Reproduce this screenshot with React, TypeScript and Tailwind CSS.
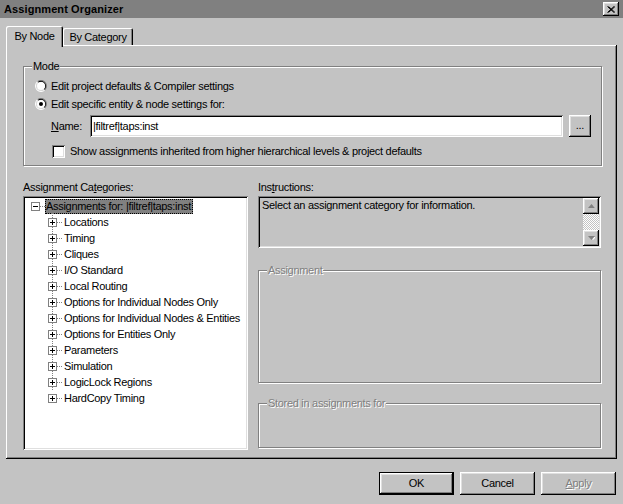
import React from 'react';

const raised =
  'shadow-[inset_-1px_-1px_#000,inset_1px_1px_#fff,inset_-2px_-2px_#808080,inset_2px_2px_#dfdfdf]';
const sunken =
  'shadow-[inset_1px_1px_#808080,inset_-1px_-1px_#fff,inset_2px_2px_#000,inset_-2px_-2px_#dfdfdf]';
const etched = 'border border-[#808080] shadow-[inset_1px_1px_#fff,1px_1px_#fff]';
const disabledText = 'text-[#808080] [text-shadow:1px_1px_0_#fff]';

const categories = [
  'Locations',
  'Timing',
  'Cliques',
  'I/O Standard',
  'Local Routing',
  'Options for Individual Nodes Only',
  'Options for Individual Nodes & Entities',
  'Options for Entities Only',
  'Parameters',
  'Simulation',
  'LogicLock Regions',
  'HardCopy Timing',
];

function Radio({ checked }: { checked?: boolean }) {
  return (
    <svg width="12" height="12" viewBox="0 0 12 12" className="shrink-0">
      <circle cx="6" cy="6" r="5.5" fill="none" stroke="#fff" strokeWidth="1" strokeDasharray="17.3 17.3" strokeDashoffset="-8.6" transform="rotate(-45 6 6)" />
      <circle cx="6" cy="6" r="5.5" fill="none" stroke="#808080" strokeWidth="1" strokeDasharray="17.3 17.3" strokeDashoffset="8.6" transform="rotate(-45 6 6)" />
      <circle cx="6" cy="6" r="4.5" fill="none" stroke="#000" strokeWidth="1" strokeDasharray="14.1 14.1" strokeDashoffset="7" transform="rotate(-45 6 6)" />
      <circle cx="6" cy="6" r="4.5" fill="none" stroke="#dfdfdf" strokeWidth="1" strokeDasharray="14.1 14.1" strokeDashoffset="-7" transform="rotate(-45 6 6)" />
      <circle cx="6" cy="6" r="4" fill="#fff" />
      {checked && <circle cx="6" cy="6" r="2" fill="#000" />}
    </svg>
  );
}

function Expander({ minus }: { minus?: boolean }) {
  return (
    <svg width="9" height="9" viewBox="0 0 9 9" className="shrink-0 relative z-10">
      <rect x="0.5" y="0.5" width="8" height="8" fill="#fff" stroke="#808080" />
      <line x1="2" y1="4.5" x2="7" y2="4.5" stroke="#000" />
      {!minus && <line x1="4.5" y1="2" x2="4.5" y2="7" stroke="#000" />}
    </svg>
  );
}

function GroupBox({ label, disabled, className, children }: { label: string; disabled?: boolean; className?: string; children?: React.ReactNode }) {
  return (
    <div className={`relative ${etched} ${className ?? ''}`}>
      <span className={`absolute left-[8px] top-[-8px] px-[1px] bg-[#c3c3c3] leading-[14px] ${disabled ? disabledText : ''}`}>
        {label}
      </span>
      {children}
    </div>
  );
}

function ArrowButton({ up }: { up?: boolean }) {
  return (
    <div className={`w-[16px] h-[16px] bg-[#c3c3c3] flex items-center justify-center ${raised}`}>
      <svg width="7" height="4" viewBox="0 0 7 4">
        {up ? (
          <>
            <path d="M1 4 L4 1 L7 4 Z" fill="#fff" transform="translate(1 1)" />
            <path d="M0 4 L3.5 0 L7 4 Z" fill="#808080" />
          </>
        ) : (
          <>
            <path d="M1 0 L4 3 L7 0 Z" fill="#fff" transform="translate(1 1)" />
            <path d="M0 0 L3.5 4 L7 0 Z" fill="#808080" />
          </>
        )}
      </svg>
    </div>
  );
}

export default function App() {
  return (
    <div className="w-[623px] h-[504px] bg-[#c3c3c3] flex flex-col font-['Liberation_Sans',Arial,sans-serif] text-[11px] tracking-[-0.3px] text-black overflow-hidden select-none">
      {/* Title bar */}
      <div className="h-[18px] bg-[#808080] flex items-center justify-between pl-[4px] pr-[4px]">
        <span className="font-bold text-[11px] tracking-[0.1px] leading-none">Assignment Organizer</span>
        <div className={`w-[16px] h-[14px] bg-[#c3c3c3] flex items-center justify-center ${raised}`}>
          <svg width="8" height="7" viewBox="0 0 8 7">
            <path d="M0.5 0.5 L7 6.5 M1.5 0.5 L8 6.5 M7 0.5 L0.5 6.5 M8 0.5 L1.5 6.5" stroke="#000" strokeWidth="1" />
          </svg>
        </div>
      </div>

      {/* Tabs */}
      <div className="flex items-end h-[19px] mt-[8px] pl-[6px]">
        <div className="relative z-10 -mb-[2px] h-[21px] w-[57px] bg-[#c3c3c3] rounded-t-[2px] shadow-[inset_1px_1px_#fff,inset_-1px_0_#000,inset_-2px_0_#808080] flex items-start justify-center pt-[4px] leading-[12px]">
          By Node
        </div>
        <div className="h-[17px] w-[70px] bg-[#c3c3c3] rounded-t-[2px] shadow-[inset_1px_1px_#fff,inset_-1px_0_#000,inset_-2px_0_#808080] flex items-start justify-center pt-[3px] leading-[12px]">
          By Category
        </div>
      </div>

      {/* Tab panel */}
      <div className="ml-[6px] w-[611px] h-[414px] pl-[17px] pr-[15px] pt-[21px] shadow-[inset_-1px_-1px_#000,inset_1px_1px_#fff,inset_-2px_-2px_#808080]">
        <GroupBox label="Mode" className="h-[100px] w-[579px] pl-[11px] pt-[12px]">
          <div className="flex items-center gap-[4px] h-[14px]">
            <Radio />
            <span className="leading-[14px]">Edit project defaults &amp; Compiler settings</span>
          </div>
          <div className="flex items-center gap-[4px] h-[14px] mt-[4px]">
            <Radio checked />
            <span className="leading-[14px]">Edit specific entity &amp; node settings for:</span>
          </div>
          <div className="flex items-center mt-[4px] pl-[16px] h-[22px]">
            <span className="w-[39px]">
              <span className="underline">N</span>ame:
            </span>
            <div className={`w-[473px] h-[22px] bg-white pl-[3px] flex items-center ${sunken}`}>
              |filtref|taps:inst
            </div>
            <div className={`ml-[6px] w-[22px] h-[22px] bg-[#c3c3c3] flex items-center justify-center pb-[2px] ${raised}`}>
              ...
            </div>
          </div>
          <div className="flex items-center gap-[5px] mt-[8px] pl-[17px] h-[13px]">
            <div className={`w-[13px] h-[13px] bg-white shrink-0 ${sunken}`} />
            <span className="leading-[13px]">Show assignments inherited from higher hierarchical levels &amp; project defaults</span>
          </div>
        </GroupBox>

        <div className="flex gap-[10px] mt-[15px]">
          {/* Left column: tree */}
          <div className="w-[225px] flex flex-col">
            <div className="h-[15px] leading-[12px]">
              Assignment Ca<span className="underline">t</span>egories:
            </div>
            <div className={`h-[254px] bg-white pt-[2px] pl-[8px] ${sunken}`}>
              <div className="flex items-center h-[16px]">
                <Expander minus />
                <span className="w-[5px] shrink-0 border-t border-dotted border-[#808080]" />
                <span className="shrink-0 whitespace-nowrap bg-[#808080] outline outline-1 outline-dotted outline-black -outline-offset-1 pl-[1px] pr-[2px] leading-[14px] h-[15px]">
                  Assignments for: |filtref|taps:inst
                </span>
              </div>
              <div className="relative pl-[17px]">
                <div className="absolute left-[21px] top-[-4px] h-[180px] border-l border-dotted border-[#808080]" />
                {categories.map((c) => (
                  <div key={c} className="flex items-center h-[16px]">
                    <Expander />
                    <span className="w-[5px] border-t border-dotted border-[#808080]" />
                    <span className="pl-[2px] leading-[14px] whitespace-nowrap">{c}</span>
                  </div>
                ))}
              </div>
            </div>
          </div>

          {/* Right column */}
          <div className="w-[343px] flex flex-col">
            <div className="h-[15px] leading-[12px]">
              Ins<span className="underline">t</span>ructions:
            </div>
            <div className={`h-[52px] bg-[#c3c3c3] flex p-[2px] ${sunken}`}>
              <div className="flex-1 pl-[2px] pt-[1px] leading-[13px]">
                Select an assignment category for information.
              </div>
              <div className="w-[16px] flex flex-col">
                <ArrowButton up />
                <div className="flex-1 bg-[repeating-conic-gradient(#c3c3c3_0_25%,#ffffff_0_50%)] bg-[length:2px_2px]" />
                <ArrowButton />
              </div>
            </div>
            <GroupBox label="Assignment" disabled className="mt-[22px] h-[113px]" />
            <GroupBox label="Stored in assignments for" disabled className="mt-[20px] h-[45px]" />
          </div>
        </div>
      </div>

      {/* Buttons */}
      <div className="flex justify-end gap-[6px] mt-[13px] pr-[7px]">
        <div className="w-[75px] h-[23px] border border-black">
          <div className={`w-full h-full bg-[#c3c3c3] flex items-center justify-center ${raised}`}>OK</div>
        </div>
        <div className={`w-[75px] h-[23px] bg-[#c3c3c3] flex items-center justify-center ${raised}`}>Cancel</div>
        <div className={`w-[75px] h-[23px] bg-[#c3c3c3] flex items-center justify-center ${raised} ${disabledText}`}>
          <span className="underline">A</span>pply
        </div>
      </div>
    </div>
  );
}
